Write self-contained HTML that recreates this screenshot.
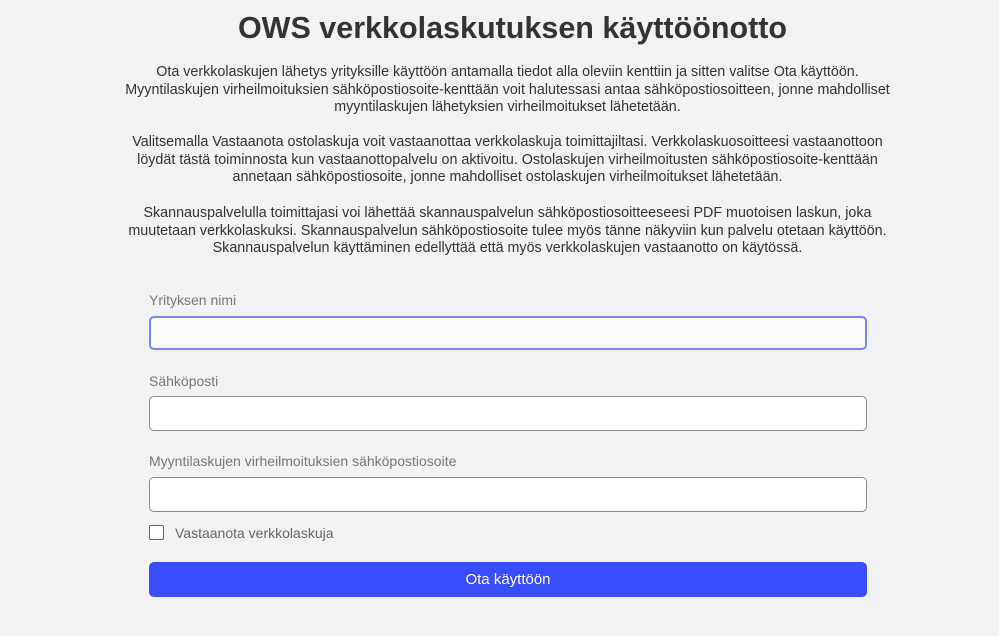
<!DOCTYPE html>
<html><head><meta charset="utf-8"><style>
html,body{margin:0;padding:0;background:#f2f2f4;width:999px;height:636px;overflow:hidden;font-family:"Liberation Sans",sans-serif;color:#333}
h1{position:absolute;top:7px;left:13px;width:999px;text-align:center;margin:0;font-size:30.5px;font-weight:bold;color:#333;line-height:42px}
.p{position:absolute;left:8px;width:999px;text-align:center;font-size:14.3px;line-height:17.6px;color:#333}
.l{position:absolute;left:149px;font-size:14px;color:#777}
.in{position:absolute;left:149px;width:716px;height:33px;border:1px solid #888;border-radius:5px;background:#fff;box-sizing:border-box}
.cb{position:absolute;left:149px;top:525px;width:15px;height:15px;border:1.5px solid #666;border-radius:2px;box-sizing:border-box;background:#fff}
.btn{position:absolute;left:149px;top:562px;width:718px;height:35px;background:#3a4cff;border-radius:5px;color:#fff;text-align:center;line-height:35px;font-size:15px}
</style></head><body>
<h1>OWS verkkolaskutuksen käyttöönotto</h1>
<div class="p" style="top:64px">Ota verkkolaskujen lähetys yrityksille käyttöön antamalla tiedot alla oleviin kenttiin ja sitten valitse Ota käyttöön.<br>Myyntilaskujen virheilmoituksien sähköpostiosoite-kenttään voit halutessasi antaa sähköpostiosoitteen, jonne mahdolliset<br>myyntilaskujen lähetyksien virheilmoitukset lähetetään.</div>
<div class="p" style="top:134px">Valitsemalla Vastaanota ostolaskuja voit vastaanottaa verkkolaskuja toimittajiltasi. Verkkolaskuosoitteesi vastaanottoon<br>löydät tästä toiminnosta kun vastaanottopalvelu on aktivoitu. Ostolaskujen virheilmoitusten sähköpostiosoite-kenttään<br>annetaan sähköpostiosoite, jonne mahdolliset ostolaskujen virheilmoitukset lähetetään.</div>
<div class="p" style="top:205px">Skannauspalvelulla toimittajasi voi lähettää skannauspalvelun sähköpostiosoitteeseesi PDF muotoisen laskun, joka<br>muutetaan verkkolaskuksi. Skannauspalvelun sähköpostiosoite tulee myös tänne näkyviin kun palvelu otetaan käyttöön.<br>Skannauspalvelun käyttäminen edellyttää että myös verkkolaskujen vastaanotto on käytössä.</div>
<div class="l" style="top:292px">Yrityksen nimi</div>
<div class="in" style="top:316px;height:34px;border:2px solid #7b86f5;background:#fcfcfc;width:718px"></div>
<div class="l" style="top:373px">Sähköposti</div>
<div class="in" style="top:396px;width:718px;height:35px"></div>
<div class="l" style="top:453px">Myyntilaskujen virheilmoituksien sähköpostiosoite</div>
<div class="in" style="top:477px;width:718px;height:35px"></div>
<div class="cb"></div>
<div class="l" style="left:175px;top:525px;color:#666">Vastaanota verkkolaskuja</div>
<div class="btn">Ota käyttöön</div>
</body></html>
